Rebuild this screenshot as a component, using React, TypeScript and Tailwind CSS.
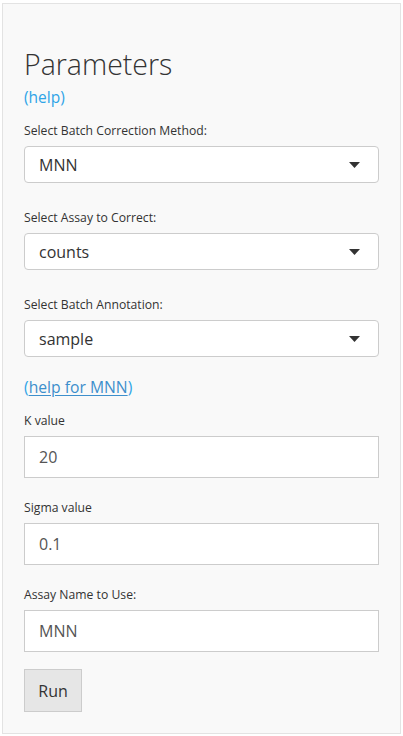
import React from 'react';

const font = { fontFamily: '"Open Sans", "Liberation Sans", sans-serif' };

const Label = ({ children, top }: { children: React.ReactNode; top: string }) => (
  <div className={`text-[12.2px] leading-[18px] text-[#333] ${top}`}>{children}</div>
);

const SelectBox = ({ value }: { value: string }) => (
  <div className="mt-[6px] flex h-[37px] items-center justify-between rounded-[4px] border border-[#cccccc] bg-white pl-[14px] pr-[18px] text-[16px] text-[#333]">
    <span>{value}</span>
    <svg width="11" height="6" viewBox="0 0 11 6">
      <path d="M0 0 L11 0 L5.5 6 Z" fill="#333" />
    </svg>
  </div>
);

const TextInput = ({ value }: { value: string }) => (
  <div className="mt-[6px] flex h-[42px] items-center border border-[#cccccc] bg-white pl-[14px] text-[16px] text-[#555]">
    {value}
  </div>
);

export default function App() {
  return (
    <div className="bg-white pl-[2px] pt-[3px]" style={font}>
      <div className="flex h-[731px] w-[399px] flex-col border border-[#e3e3e3] bg-[#f9f9f9] px-[21px] pt-[43px]">
        <h2 className="text-[28.5px] font-light leading-[34px] text-[#333]">Parameters</h2>
        <a className="mt-[6px] text-[15.5px] leading-[20px] text-[#2fa4e7]">(help)</a>

        <Label top="mt-[15px]">Select Batch Correction Method:</Label>
        <SelectBox value="MNN" />

        <Label top="mt-[26px]">Select Assay to Correct:</Label>
        <SelectBox value="counts" />

        <Label top="mt-[26px]">Select Batch Annotation:</Label>
        <SelectBox value="sample" />

        <div className="mt-[20px] text-[15.7px] leading-[20px] text-[#2fa4e7]">
          (<span className="text-[#3d8fcc] underline underline-offset-2">help for MNN</span>)
        </div>

        <Label top="mt-[15px]">K value</Label>
        <TextInput value="20" />

        <Label top="mt-[21px]">Sigma value</Label>
        <TextInput value="0.1" />

        <Label top="mt-[21px]">Assay Name to Use:</Label>
        <TextInput value="MNN" />

        <div className="mt-[17px]">
          <button className="h-[43px] w-[58px] border border-[#cccccc] bg-[#e6e6e6] text-[16px] text-[#333]">
            Run
          </button>
        </div>
      </div>
    </div>
  );
}
